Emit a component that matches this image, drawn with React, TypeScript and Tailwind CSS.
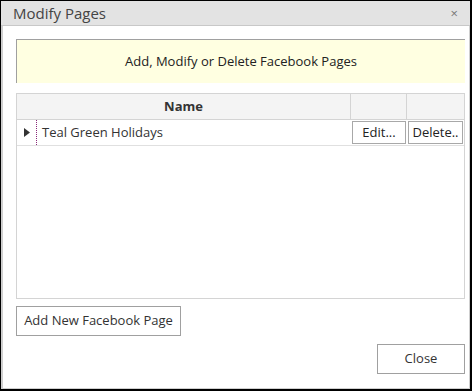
import React from "react";

const font = { fontFamily: '"Open Sans", "Noto Sans", sans-serif' };

const App = () => {
  return (
    <div
      className="w-[472px] h-[391px] border border-black border-r-2 border-b-2 bg-white flex flex-col"
      style={font}
    >
      <div className="h-[25px] bg-[#e3e3e3] border-b border-[#c8c8c8] flex items-center justify-between pl-[12px] pr-[12px] shrink-0">
        <span className="text-[15px] text-[#444] leading-none">Modify Pages</span>
        <span className="text-[13px] text-[#777] leading-none">×</span>
      </div>
      <div className="flex-1 border-l-2 border-r border-b border-[#cfcfcf] pl-[13px] pr-[2px] pt-[13px] pb-[13px] flex flex-col">
        <div className="h-[44px] mr-[2px] bg-[#ffffe1] border-t border-l border-[#a0a0a0] flex items-center justify-center text-[13px] text-[#222]">
          Add, Modify or Delete Facebook Pages
        </div>
        <div className="mt-[10px] mr-[2px] h-[206px] border border-[#d4d4d4] flex flex-col">
          <div className="h-[26px] bg-[#f4f4f4] border-b border-[#d4d4d4] flex text-[13px]">
            <div className="w-[334px] border-r border-[#d4d4d4] flex items-center justify-center font-bold text-[#333]">
              Name
            </div>
            <div className="w-[56px] border-r border-[#d4d4d4]"></div>
            <div className="flex-1"></div>
          </div>
          <div className="h-[26px] border-b border-[#e0e0e0] flex text-[13px]">
            <div className="w-[19px] flex items-center justify-center">
              <svg width="6" height="9" viewBox="0 0 6 9">
                <polygon points="0,0 6,4.5 0,9" fill="#333" />
              </svg>
            </div>
            <div className="w-[315px] border-l border-dotted border-[#8a2a7a] flex items-center pl-[5px] text-[#333]">
              Teal Green Holidays
            </div>
            <div className="w-[56px] p-[1px] flex">
              <div className="flex-1 border border-[#a8a8a8] flex items-center justify-center text-[#222]">
                Edit...
              </div>
            </div>
            <div className="flex-1 p-[1px] flex">
              <div className="flex-1 border border-[#a8a8a8] flex items-center justify-center text-[#222]">
                Delete..
              </div>
            </div>
          </div>
        </div>
        <div className="mt-[7px]">
          <button className="w-[165px] h-[30px] border border-[#a0a0a0] bg-white text-[13px] text-[#333]">
            Add New Facebook Page
          </button>
        </div>
        <div className="mt-[8px] flex justify-end mr-[2px]">
          <button className="w-[88px] h-[30px] border border-[#a0a0a0] bg-white text-[13px] text-[#333]">
            Close
          </button>
        </div>
      </div>
    </div>
  );
};

export default App;
